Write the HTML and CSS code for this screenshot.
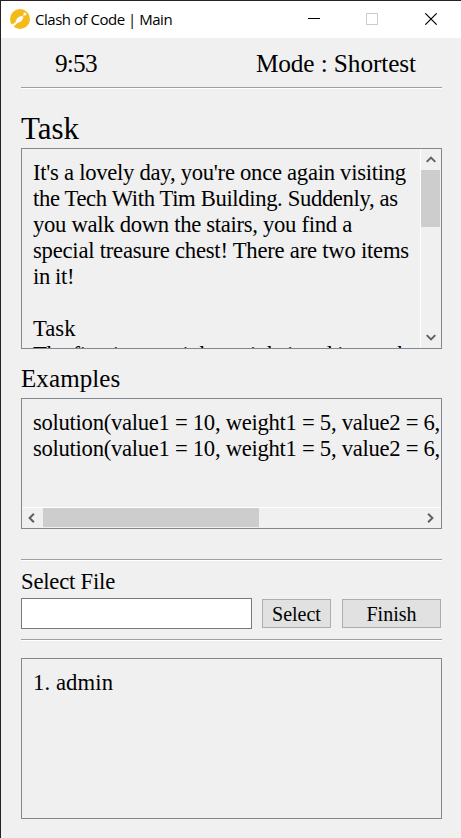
FILE: index.html
```
<!DOCTYPE html>
<html lang="en">
<head>
<meta charset="utf-8">
<title>Clash of Code | Main</title>
<link rel="stylesheet" href="styles.css">
</head>
<body>
<div class="window">
  <header class="titlebar">
    <svg class="logo" width="20" height="20" viewBox="0 0 20 20">
      <circle cx="10" cy="10" r="10" fill="#f4bb18"/>
      <path d="M0 17.2L5.6 13C6 10 8.2 7.5 11.8 6.7L13.4 8.1C12.9 11.4 10.5 13.6 7.3 14.1L2.2 19Z" fill="#fff"/>
      <path d="M12.6 7.4L14.8 5.2" stroke="#fff" stroke-width=".6"/>
      <circle cx="14.9" cy="5.1" r="1.5" fill="#fff"/>
    </svg>
    <h1 class="title">Clash of Code | Main</h1>
    <svg class="controls" width="130" height="12" viewBox="0 0 130 12" fill="none">
      <path d="M0 5.5H12" stroke="#000"/>
      <rect x="58.5" y=".5" width="11" height="11" stroke="#ccc"/>
      <path d="M117.3 .3L128.7 11.7M128.7 .3L117.3 11.7" stroke="#000" stroke-width="1.1"/>
    </svg>
  </header>
  <main class="content">
    <div class="status"><span class="time">9:53</span><span class="mode">Mode : Shortest</span></div>
    <hr class="rule">
    <h2 class="task-title">Task</h2>
    <section class="panel task">
      <div class="task-text">
        <p class="line l1">It's a lovely day, you're once again visiting</p>
        <p class="line l2">the Tech With Tim Building. Suddenly, as</p>
        <p class="line l3">you walk down the stairs, you find a</p>
        <p class="line l4">special treasure chest! There are two items</p>
        <p class="line l5">in it!</p>
        <p class="line">&nbsp;</p>
        <p class="line l7">Task</p>
        <p class="line l8">The first item weighs weight1 and is worth</p>
      </div>
      <div class="vscroll">
        <svg class="up" width="10" height="7" viewBox="0 0 10 7"><path d="M.7 5.9L5 1.6L9.3 5.9" fill="none" stroke="#606060" stroke-width="2"/></svg>
        <div class="vthumb"></div>
        <svg class="down" width="10" height="7" viewBox="0 0 10 7"><path d="M.7 1.1L5 5.4L9.3 1.1" fill="none" stroke="#606060" stroke-width="2"/></svg>
      </div>
    </section>
    <h3 class="examples-title">Examples</h3>
    <section class="panel examples">
      <div class="examples-text">
        <p class="line ex">solution(value1 = 10, weight1 = 5, value2 = 6,</p>
        <p class="line ex">solution(value1 = 10, weight1 = 5, value2 = 6,</p>
      </div>
      <div class="hscroll">
        <svg class="left" width="7" height="10" viewBox="0 0 7 10"><path d="M5.9 .7L1.6 5L5.9 9.3" fill="none" stroke="#606060" stroke-width="2"/></svg>
        <div class="hthumb"></div>
        <svg class="right" width="7" height="10" viewBox="0 0 7 10"><path d="M1.1 .7L5.4 5L1.1 9.3" fill="none" stroke="#606060" stroke-width="2"/></svg>
      </div>
    </section>
    <hr class="rule file-rule">
    <label class="file-label" for="file">Select File</label>
    <div class="file-row">
      <input class="file" id="file" type="text">
      <button class="btn select">Select</button>
      <button class="btn finish">Finish</button>
    </div>
    <hr class="rule players-rule">
    <section class="panel players"><p class="line player">1. admin</p></section>
  </main>
</div>
</body>
</html>
```
FILE: styles.css
```
* { box-sizing: border-box; margin: 0; padding: 0; }
body { overflow: hidden; }
.window {
  width: 461px;
  height: 838px;
  border-top: 1px solid #252226;
  border-left: 1px solid #252226;
  background: #f0f0f0;
  color: #000;
  font-family: "Liberation Serif", "Times New Roman", serif;
}
.titlebar {
  display: flex;
  align-items: center;
  height: 37px;
  padding-left: 9px;
  background: #fff;
}
.logo { margin-top: -1px; }
.title {
  margin: -1px 0 0 5px;
  flex: 1;
  font: 400 15px/20px "Open Sans", "Segoe UI", sans-serif;
  letter-spacing: -0.48px;
  white-space: nowrap;
}
.controls { margin: -1px 23px 0 0; }
.content { padding: 0 19px 0 20px; }
.status {
  display: flex;
  justify-content: space-between;
  height: 49px;
  padding: 11px 26px 0 34px;
  font-size: 25.3px;
  line-height: 29px;
}
.time { letter-spacing: -0.8px; }
.mode { letter-spacing: -0.1px; }
.rule { height: 2px; border: 0; border-top: 1px solid #a0a0a0; background: #fff; }
.task-title { height: 59px; padding-top: 22px; font-size: 31px; font-weight: 400; line-height: 36px; }
.panel { border: 1px solid #828790; overflow: hidden; }
.task { display: flex; height: 201px; }
.task-text { flex: 1; padding: 11px 0 0 11px; overflow: hidden; }
.line { height: 26px; font-size: 22.67px; line-height: 26px; white-space: nowrap; }
.l1 { letter-spacing: -0.28px; }
.l2 { letter-spacing: -0.36px; }
.l3 { letter-spacing: -0.3px; }
.l4 { letter-spacing: -0.23px; }
.l5 { letter-spacing: -0.4px; }
.l8 { letter-spacing: -0.34px; }
.ex { letter-spacing: -0.29px; }
.player { letter-spacing: 0.1px; }
.vscroll {
  display: flex;
  flex-direction: column;
  align-items: center;
  width: 21px;
  border-left: 1px solid #fff;
}
.up { margin: 7px 0; flex: none; }
.vthumb { align-self: flex-start; width: 19px; height: 57px; background: #cdcdcd; }
.down { margin: auto 0 7px; flex: none; }
.examples-title { height: 49px; padding-top: 16px; font-size: 25px; font-weight: 400; line-height: 28px; letter-spacing: 0.1px; }
.examples { display: flex; flex-direction: column; height: 131px; }
.examples-text { flex: 1; padding: 11px 0 0 11px; }
.hscroll { display: flex; align-items: center; height: 21px; border-top: 1px solid #fff; }
.left { margin: 0 8px 0 6px; }
.hthumb { align-self: flex-start; width: 216px; height: 19px; background: #cdcdcd; }
.right { margin: 0 7px 0 auto; }
.file-rule { margin-top: 30px; }
.file-label { display: block; height: 37px; padding-top: 8px; font-size: 22.67px; line-height: 26px; letter-spacing: -0.2px; }
.file-row { display: flex; align-items: center; height: 31px; }
.file { width: 231px; height: 31px; border: 1px solid #7a7a7a; border-radius: 0; background: #fff; }
.btn {
  height: 29px;
  border: 1px solid #adadad;
  border-radius: 0;
  background: #e1e1e1;
  color: #000;
  font: 20px/26px "Liberation Serif", "Times New Roman", serif;
}
.select { width: 69px; margin-left: 10px; }
.finish { width: 99px; margin-left: 11px; }
.players-rule { margin-top: 10px; }
.players { height: 161px; margin-top: 17px; padding: 11px 0 0 11px; }
```
